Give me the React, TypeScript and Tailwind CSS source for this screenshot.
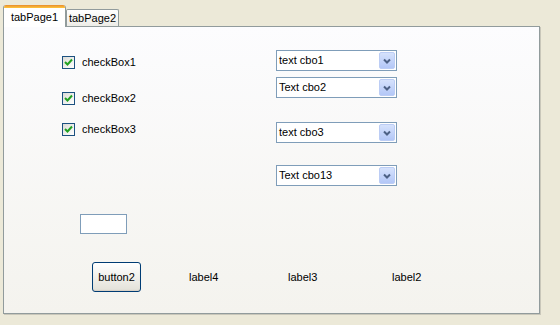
import React from 'react';

const font = { fontFamily: '"Liberation Sans", Arial, sans-serif' };

const CheckBox = ({ label }: { label: string }) => (
  <div className="flex items-center h-[17px] gap-[7px]">
    <div className="w-[13px] h-[13px] border border-[#1c5180] bg-gradient-to-br from-[#dcdcd7] to-white flex items-center justify-center">
      <svg width="9" height="9" viewBox="0 0 9 9">
        <path d="M1 4 L3.5 6.5 L8 1.5" fill="none" stroke="#21a121" strokeWidth="2" />
      </svg>
    </div>
    <span className="text-[11px] text-black">{label}</span>
  </div>
);

const Combo = ({ text }: { text: string }) => (
  <div className="w-[121px] h-[21px] border border-[#7f9db9] bg-white flex items-center">
    <span className="flex-1 pl-[2px] text-[11px] text-black leading-none">{text}</span>
    <div className="w-[16px] h-[17px] mr-px rounded-[2px] border border-[#bccdf5] bg-gradient-to-b from-[#d6e2fc] to-[#b3c7f7] flex items-center justify-center">
      <svg width="8" height="6" viewBox="0 0 8 6">
        <path d="M1 1.5 L4 4.5 L7 1.5" fill="none" stroke="#4d6185" strokeWidth="2" />
      </svg>
    </div>
  </div>
);

export default function App() {
  return (
    <div className="w-[560px] h-[325px] bg-[#ece9d8] pt-[5px] pl-[3px]" style={font}>
      {/* tabs */}
      <div className="flex items-end h-[22px]">
        <div className="relative z-10 w-[63px] h-[22px] rounded-t-[3px] border-x border-[#919b9c] bg-white flex flex-col overflow-hidden">
          <div className="h-[3px] bg-gradient-to-b from-[#e68b2c] to-[#ffc73c]" />
          <div className="flex-1 flex items-center justify-center text-[11px] text-black pb-[1px]">tabPage1</div>
        </div>
        <div className="w-[53px] h-[18px] rounded-t-[2px] border-x border-t border-[#919b9c] bg-gradient-to-b from-white to-[#ecebe6] flex items-center justify-center text-[11px] text-black pb-[1px]">
          tabPage2
        </div>
      </div>

      {/* tab page */}
      <div className="relative -mt-px w-[537px] h-[288px] border border-[#919b9c] bg-gradient-to-b from-[#fcfcfe] to-[#f4f3ee] shadow-[1px_1px_0_#c9c7ba] flex flex-col">
        <div className="flex">
          <div className="w-[272px] pl-[58px] pt-[27px] flex flex-col">
            <CheckBox label="checkBox1" />
            <div className="mt-[19px]"><CheckBox label="checkBox2" /></div>
            <div className="mt-[14px]"><CheckBox label="checkBox3" /></div>
          </div>
          <div className="pt-[23px] flex flex-col">
            <Combo text="text cbo1" />
            <div className="mt-[6px]"><Combo text="Text cbo2" /></div>
            <div className="mt-[24px]"><Combo text="text cbo3" /></div>
            <div className="mt-[22px]"><Combo text="Text cbo13" /></div>
          </div>
        </div>

        <div className="mt-[28px] ml-[76px] w-[47px] h-[20px] border border-[#7f9db9] bg-white" />

        <div className="mt-[28px] ml-[88px] flex items-center">
          <button className="w-[49px] h-[30px] rounded-[3px] border border-[#003c74] bg-gradient-to-b from-white to-[#e3e1d8] shadow-[inset_0_-1px_1px_#d6d0c5] text-[11px] text-black">
            button2
          </button>
          <span className="ml-[48px] w-[99px] text-[11px] text-black">label4</span>
          <span className="w-[104px] text-[11px] text-black">label3</span>
          <span className="text-[11px] text-black">label2</span>
        </div>
      </div>
    </div>
  );
}
